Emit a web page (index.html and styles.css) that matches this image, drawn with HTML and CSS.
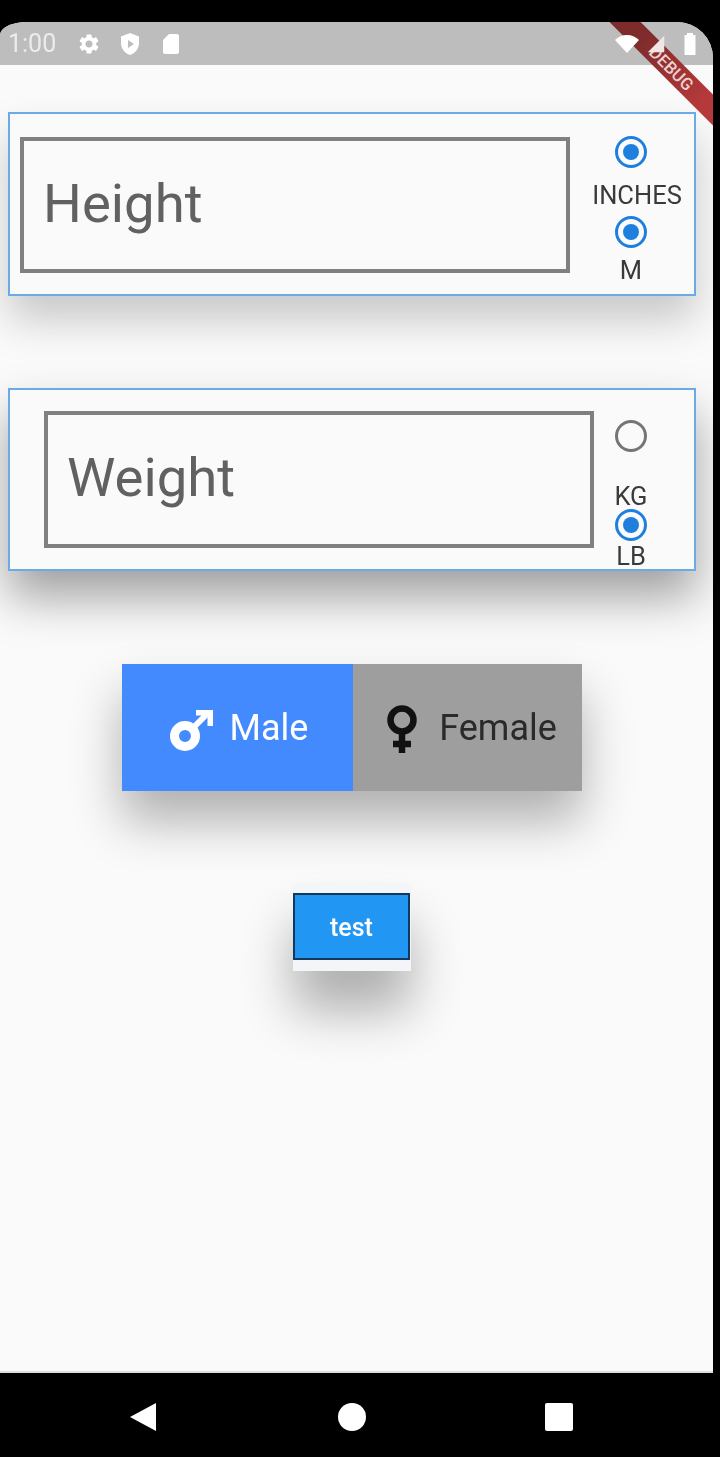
FILE: index.html
```html
<!DOCTYPE html>
<html lang="en">
<head>
  <meta charset="UTF-8">
  <title>BMI</title>
  <link rel="stylesheet" href="styles.css">
</head>
<body>
  <div class="screen">
    <div class="status">
      <span class="time">1:00</span>
      <svg class="st-icon" viewBox="0 0 24 24"><path d="M19.14 12.94c.04-.3.06-.61.06-.94 0-.32-.02-.64-.07-.94l2.03-1.58c.18-.14.23-.41.12-.61l-1.92-3.32c-.12-.22-.37-.29-.59-.22l-2.39.96c-.5-.38-1.03-.7-1.62-.94l-.36-2.54c-.04-.24-.24-.41-.48-.41h-3.84c-.24 0-.43.17-.47.41l-.36 2.54c-.59.24-1.13.57-1.62.94l-2.39-.96c-.22-.08-.47 0-.59.22L2.74 8.87c-.12.21-.08.47.12.61l2.03 1.58c-.05.3-.09.63-.09.94s.02.64.07.94l-2.03 1.58c-.18.14-.23.41-.12.61l1.92 3.32c.12.22.37.29.59.22l2.39-.96c.5.38 1.03.7 1.62.94l.36 2.54c.05.24.24.41.48.41h3.84c.24 0 .44-.17.47-.41l.36-2.54c.59-.24 1.13-.56 1.62-.94l2.39.96c.22.08.47 0 .59-.22l1.92-3.32c.12-.22.07-.47-.12-.61l-2.01-1.58zM12 15.6c-1.98 0-3.6-1.62-3.6-3.6s1.62-3.6 3.6-3.6 3.6 1.62 3.6 3.6-1.62 3.6-3.6 3.6z"/></svg>
      <svg class="st-icon" viewBox="0 0 24 24"><path fill-rule="evenodd" d="M12 1 3 4.5v6.5c0 5.5 3.8 10.6 9 12 5.200-1.400 9-6.500 9-12V4.500zM10 8l6 4-6 4z"/></svg>
      <svg class="st-icon" viewBox="0 0 24 24"><path d="M18 2h-8L4 8v12c0 1.100.9 2 2 2h12c1.100 0 2-.9 2-2V4c0-1.100-.9-2-2-2z"/></svg>
      <span class="status-gap"></span>
      <svg class="st-icon" viewBox="0 0 24 24"><path d="M12 21 0 8c3-3 7-5 12-5s9 2 12 5z"/></svg>
      <svg class="st-icon signal" viewBox="0 0 24 24"><path d="M21 3v18H3z"/></svg>
      <svg class="st-icon" viewBox="0 0 24 24"><path d="M9 1h6v2h2.500v20h-11V3H9z"/></svg>
    </div>

    <div class="debug"><span>DEBUG</span></div>

    <main class="content">
      <section class="card card-height">
        <div class="field field-height">Height</div>
        <div class="radios">
          <span class="radio on"></span>
          <span class="radio-label inches">INCHES</span>
          <span class="radio on"></span>
          <span class="radio-label m">M</span>
        </div>
      </section>

      <section class="card card-weight">
        <div class="field field-weight">Weight</div>
        <div class="radios">
          <span class="radio"></span>
          <span class="radio-label kg">KG</span>
          <span class="radio on"></span>
          <span class="radio-label lb">LB</span>
        </div>
      </section>

      <div class="gender">
        <div class="gender-item male">
          <svg class="male-icon" viewBox="0 0 44 44"><circle cx="15" cy="28" r="10.500" fill="none" stroke="#fff" stroke-width="9"/><path d="M23 20 37 6" stroke="#fff" stroke-width="6" fill="none"/><path d="M26 2h17v16h-5.500V7.500H26z" fill="#fff"/></svg>
          <span>Male</span>
        </div>
        <div class="gender-item female">
          <svg class="female-icon" viewBox="0 0 30 48"><circle cx="15" cy="15" r="11.500" fill="none" stroke="#111" stroke-width="6.500"/><path d="M15 26v22M6 39h18" stroke="#111" stroke-width="6.500" fill="none"/></svg>
          <span>Female</span>
        </div>
      </div>

      <div class="test-wrap">
        <button class="test-btn">test</button>
      </div>
    </main>
  </div>

  <nav class="navbar">
    <svg class="nav-icon" viewBox="0 0 28 28"><path d="M26 0v28L0 14z"/></svg>
    <svg class="nav-icon" viewBox="0 0 28 28"><circle cx="14" cy="14" r="14"/></svg>
    <svg class="nav-icon" viewBox="0 0 28 28"><rect width="28" height="28" rx="2"/></svg>
  </nav>
</body>
</html>
```

FILE: styles.css
```css
html, body { margin: 0; padding: 0; }
body {
  background: #000;
  width: 720px;
  height: 1457px;
  padding-top: 22px;
  box-sizing: border-box;
  overflow: hidden;
  font-family: Roboto, "Liberation Sans", sans-serif;
}

.screen {
  position: relative;
  width: 713px;
  height: 1351px;
  background: #fafafa;
  border-radius: 27px 36px 0 0 / 13px 36px 0 0;
  border-bottom: 2px solid #ddd;
  box-sizing: border-box;
  overflow: hidden;
  filter: blur(0.7px);
}

/* status bar */
.status {
  height: 43px;
  background: #bdbdbd;
  display: flex;
  align-items: center;
  padding: 0 11px 0 8px;
  gap: 17px;
}
.time {
  color: #ececec;
  font-size: 25px;
  width: 48px;
  margin-right: 4px;
}
.st-icon { width: 24px; height: 24px; fill: #fff; flex: none; position: relative; z-index: 2; }
.st-icon.signal { fill: #f0e6e6; width: 22px; height: 22px; margin: 0 -6px 0 -11px; }
.status-gap { flex: 1; margin-right: 10px; }

.debug {
  position: absolute;
  left: 575px;
  top: 39px;
  width: 200px;
  height: 22px;
  box-sizing: border-box;
  padding-right: 10px;
  background: linear-gradient(90deg, #7d2b2b 25%, #b5393a 70%);
  transform: rotate(45deg);
  color: #eccfcf;
  font-size: 17px;
  font-weight: 500;
  line-height: 22px;
  text-align: center;
}

/* content */
.content {
  display: flex;
  flex-direction: column;
  align-items: center;
  padding: 47px 17px 0 8px;
}
.card {
  width: 100%;
  height: 184px;
  box-sizing: border-box;
  background: #fafafa;
  border: 2px solid #6aaae6;
  display: flex;
  align-items: flex-start;
  box-shadow: 0 24px 40px rgba(0, 0, 0, 0.2);
}
.card-weight {
  height: 183px;
  margin-top: 92px;
  box-shadow: 0 26px 44px rgba(0, 0, 0, 0.36);
}

.field {
  width: 550px;
  height: 136px;
  box-sizing: border-box;
  border: 4px solid #808080;
  color: #616161;
  font-size: 54.5px;
  line-height: 124px;
  padding-left: 19px;
  flex: none;
}
.field-height { margin: 23px 0 0 10px; }
.field-weight { margin: 21px 0 0 34px; height: 137px; }

.radios {
  display: flex;
  flex-direction: column;
  align-items: center;
  width: 78px;
  color: #3a3a3a;
  font-size: 25.5px;
  line-height: 26px;
}
.card-height .radios { margin: 22px 0 0 22px; }
.card-weight .radios { margin: 30px 0 0 -2px; }

.radio {
  width: 32px;
  height: 32px;
  box-sizing: border-box;
  border: 3px solid #757575;
  border-radius: 50%;
  flex: none;
  display: flex;
  align-items: center;
  justify-content: center;
}
.radio.on { border-color: #1e80dc; }
.radio.on::after {
  content: "";
  width: 16px;
  height: 16px;
  border-radius: 50%;
  background: #1e80dc;
}
.radio-label { display: block; white-space: nowrap; }
.inches { margin: 14px 0 8px 12px; }
.m { margin-top: 9px; }
.kg { margin-top: 31px; height: 26px; }
.lb { margin-top: 2px; height: 20px; }

/* gender toggle */
.gender {
  display: flex;
  width: 460px;
  height: 127px;
  margin-top: 93px;
  box-shadow: 0 30px 50px rgba(0, 0, 0, 0.3);
}
.gender-item {
  display: flex;
  align-items: center;
  justify-content: center;
  font-size: 36px;
}
.gender-item span { margin-top: 1px; }
.male { width: 231px; background: #448aff; color: #fff; gap: 16px; padding-left: 3px; box-sizing: border-box; }
.male-icon { width: 44px; height: 44px; margin-top: 4px; }
.female { width: 229px; background: #9e9e9e; color: #2a2a2a; gap: 22px; padding-left: 9px; box-sizing: border-box; }
.female-icon { width: 30px; height: 48px; margin-top: 3px; }

/* test button */
.test-wrap {
  width: 118px;
  height: 88px;
  margin-top: 92px;
  padding-top: 10px;
  box-sizing: border-box;
  background: #f3f5f9;
  box-shadow: 0 40px 50px rgba(0, 0, 0, 0.3);
}
.test-btn {
  display: block;
  width: 117px;
  height: 67px;
  box-sizing: border-box;
  background: #2196f3;
  border: 2px solid #12395c;
  color: #fff;
  font-family: inherit;
  font-size: 25px;
  font-weight: 500;
  padding: 2px 0 0;
}

/* android nav */
.navbar {
  height: 84px;
  box-sizing: border-box;
  padding: 4px 0 0 130px;
  width: 573px;
  display: flex;
  align-items: center;
  justify-content: space-between;
}
.nav-icon { width: 28px; height: 28px; fill: #fff; }
```
